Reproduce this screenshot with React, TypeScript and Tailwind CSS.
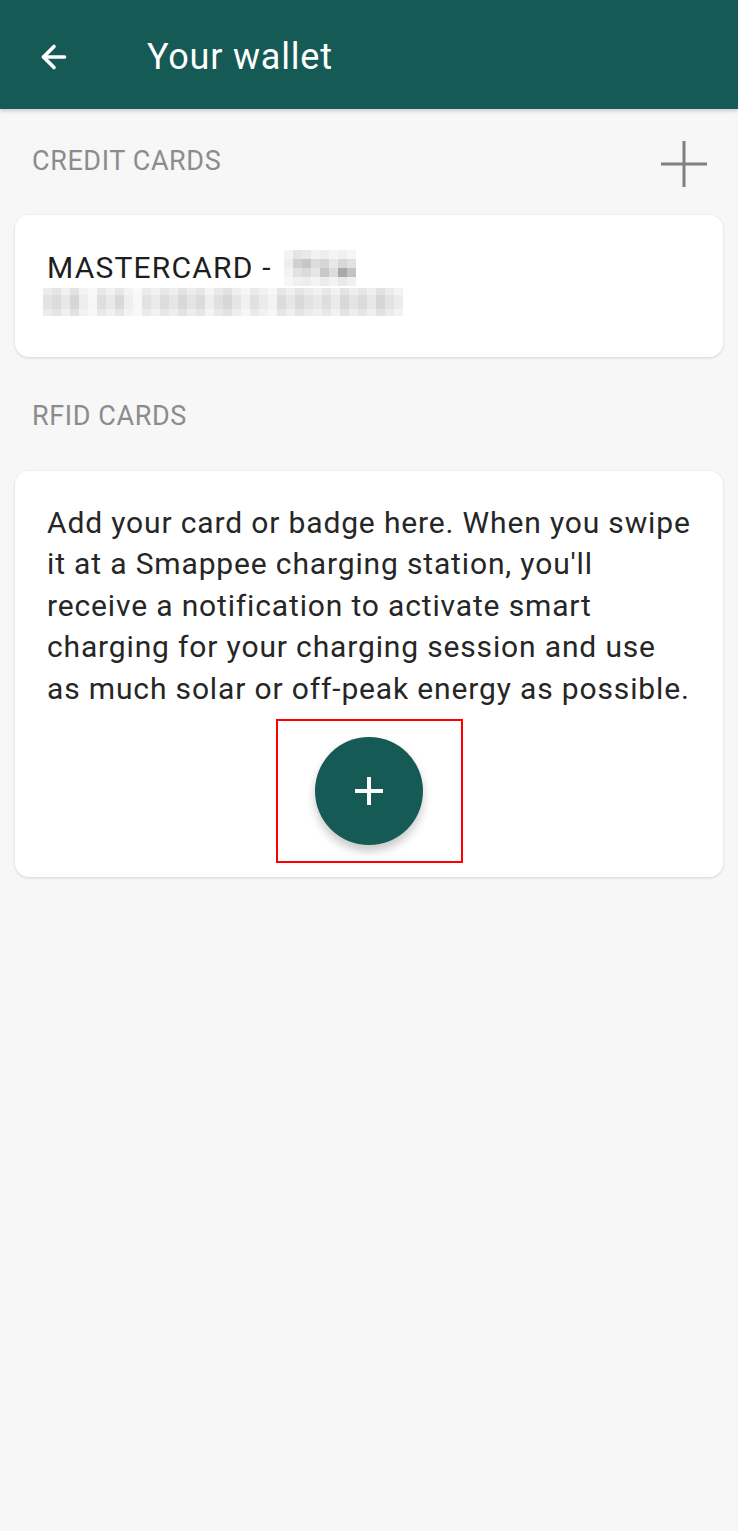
import { ArrowLeft } from 'lucide-react'

const font = { fontFamily: 'Roboto, "Noto Sans", sans-serif' }

// pixelated (redacted) card details
const row1 = [
  ['bg-[#f3f3f3]', 'bg-[#e4e4e4]', 'bg-[#e9e9e9]', 'bg-[#f2f2f2]', 'bg-[#eeeeee]', 'bg-[#f4f4f4]', 'bg-[#f0f0f0]', 'bg-[#f6f6f6]'],
  ['bg-[#eeeeee]', 'bg-[#d0d0d0]', 'bg-[#c6c6c6]', 'bg-[#dcdcdc]', 'bg-[#d6d6d6]', 'bg-[#e8e8e8]', 'bg-[#d8d8d8]', 'bg-[#e2e2e2]'],
  ['bg-[#f2f2f2]', 'bg-[#e1e1e1]', 'bg-[#dadada]', 'bg-[#e6e6e6]', 'bg-[#c8c8c8]', 'bg-[#dddddd]', 'bg-[#a9a9a9]', 'bg-[#c3c3c3]'],
  ['bg-[#f7f7f7]', 'bg-[#f0f0f0]', 'bg-[#eeeeee]', 'bg-[#f3f3f3]', 'bg-[#ececec]', 'bg-[#f2f2f2]', 'bg-[#e9e9e9]', 'bg-[#f0f0f0]'],
]

const row2 = [
  'bg-[#e3e3e3]', 'bg-[#dcdcdc]', 'bg-[#e8e8e8]', 'bg-[#d6d6d6]', 'bg-[#ededed]', 'bg-[#f6f6f6]',
  'bg-[#dedede]', 'bg-[#e9e9e9]', 'bg-[#d9d9d9]', 'bg-[#eeeeee]', 'bg-[#f7f7f7]', 'bg-[#e2e2e2]',
  'bg-[#eaeaea]', 'bg-[#dddddd]', 'bg-[#e6e6e6]', 'bg-[#d8d8d8]', 'bg-[#e4e4e4]', 'bg-[#dbdbdb]',
  'bg-[#eeeeee]', 'bg-[#e0e0e0]', 'bg-[#d7d7d7]', 'bg-[#e5e5e5]', 'bg-[#f1f1f1]', 'bg-[#e1e1e1]',
  'bg-[#ebebeb]', 'bg-[#f3f3f3]', 'bg-[#dcdcdc]', 'bg-[#e7e7e7]', 'bg-[#d9d9d9]', 'bg-[#e2e2e2]',
  'bg-[#e9e9e9]', 'bg-[#dedede]', 'bg-[#eaeaea]', 'bg-[#d8d8d8]', 'bg-[#e4e4e4]', 'bg-[#dbdbdb]',
  'bg-[#e8e8e8]', 'bg-[#d5d5d5]', 'bg-[#e3e3e3]', 'bg-[#ececec]',
]
const row2b = [
  'bg-[#ececec]', 'bg-[#e5e5e5]', 'bg-[#f0f0f0]', 'bg-[#e2e2e2]', 'bg-[#f2f2f2]', 'bg-[#f8f8f8]',
  'bg-[#e8e8e8]', 'bg-[#f1f1f1]', 'bg-[#e6e6e6]', 'bg-[#f3f3f3]', 'bg-[#f9f9f9]', 'bg-[#ebebeb]',
  'bg-[#f2f2f2]', 'bg-[#e7e7e7]', 'bg-[#eeeeee]', 'bg-[#e3e3e3]', 'bg-[#ededed]', 'bg-[#e6e6e6]',
  'bg-[#f4f4f4]', 'bg-[#e9e9e9]', 'bg-[#e2e2e2]', 'bg-[#eeeeee]', 'bg-[#f6f6f6]', 'bg-[#eaeaea]',
  'bg-[#f1f1f1]', 'bg-[#f7f7f7]', 'bg-[#e6e6e6]', 'bg-[#efefef]', 'bg-[#e4e4e4]', 'bg-[#ebebeb]',
  'bg-[#f0f0f0]', 'bg-[#e8e8e8]', 'bg-[#f1f1f1]', 'bg-[#e3e3e3]', 'bg-[#ededed]', 'bg-[#e6e6e6]',
  'bg-[#efefef]', 'bg-[#e1e1e1]', 'bg-[#ebebeb]', 'bg-[#f3f3f3]',
]

function Redacted() {
  return (
    <div className="flex flex-col">
      {[row2b, row2, row2, row2b].map((r, i) => (
        <div key={i} className="flex h-[7px]">
          {r.map((c, j) => (
            <div key={j} className={`w-[9px] h-full ${c}`} />
          ))}
        </div>
      ))}
    </div>
  )
}

export default function App() {
  return (
    <div className="min-h-[1531px] w-[738px] bg-[#f7f7f7]" style={font}>
      <header className="h-[109px] bg-[#155a54] flex items-center pt-[5px] shadow-[0_2px_4px_rgba(0,0,0,0.18)] relative z-10">
        <ArrowLeft className="ml-[36px] w-[36px] h-[36px] text-white" strokeWidth={2.4} />
        <h1 className="ml-[75px] text-white text-[36px] font-normal tracking-[0.8px]">Your wallet</h1>
      </header>

      <div className="flex items-center justify-between pl-[32px] pr-[31px] pt-[29px]">
        <span className="text-[#8c8c8c] text-[27px] tracking-[0.6px]">CREDIT CARDS</span>
        <svg width="46" height="46" viewBox="0 0 46 46" className="translate-y-[3px]">
          <path d="M23 0v46M0 23h46" stroke="#808080" strokeWidth="3" />
        </svg>
      </div>

      <div className="mx-[15px] mt-[31px] h-[142px] bg-white rounded-[14px] shadow-[0_1px_3px_rgba(0,0,0,0.14)] pl-[32px] pt-[34px]">
        <div className="flex items-center">
          <span className="text-[#1e1e1e] text-[30px] leading-[38px] tracking-[1.2px] whitespace-pre">MASTERCARD - </span>
          <div className="ml-[4px] flex flex-col">
            {row1.map((r, i) => (
              <div key={i} className="flex h-[9px]">
                {r.map((c, j) => (
                  <div key={j} className={`w-[9px] h-full ${c}`} />
                ))}
              </div>
            ))}
          </div>
        </div>
        <div className="-ml-[4px] mt-[1px]">
          <Redacted />
        </div>
      </div>

      <div className="pl-[32px] pt-[39px]">
        <span className="text-[#8c8c8c] text-[27px] tracking-[0.6px]">RFID CARDS</span>
      </div>

      <div className="mx-[15px] mt-[34px] bg-white rounded-[14px] shadow-[0_1px_3px_rgba(0,0,0,0.14)] pt-[31px] pb-[14px]">
        <p className="px-[32px] text-[#262626] text-[30px] leading-[41.5px] tracking-[0.85px] whitespace-nowrap">
          Add your card or badge here. When you swipe
          <br />
          it at a Smappee charging station, you'll
          <br />
          receive a notification to activate smart
          <br />
          charging for your charging session and use
          <br />
          as much solar or off-peak energy as possible.
        </p>
        <div className="flex justify-center mt-[10px]">
          <div className="w-[187px] h-[144px] border-2 border-[#ff0000] flex items-center justify-center">
            <button className="w-[108px] h-[108px] rounded-full bg-[#155a54] flex items-center justify-center shadow-[0_6px_10px_rgba(0,0,0,0.22)]">
              <svg width="30" height="30" viewBox="0 0 30 30">
                <path d="M15 1v28M1 15h28" stroke="#ffffff" strokeWidth="4" />
              </svg>
            </button>
          </div>
        </div>
      </div>
    </div>
  )
}
